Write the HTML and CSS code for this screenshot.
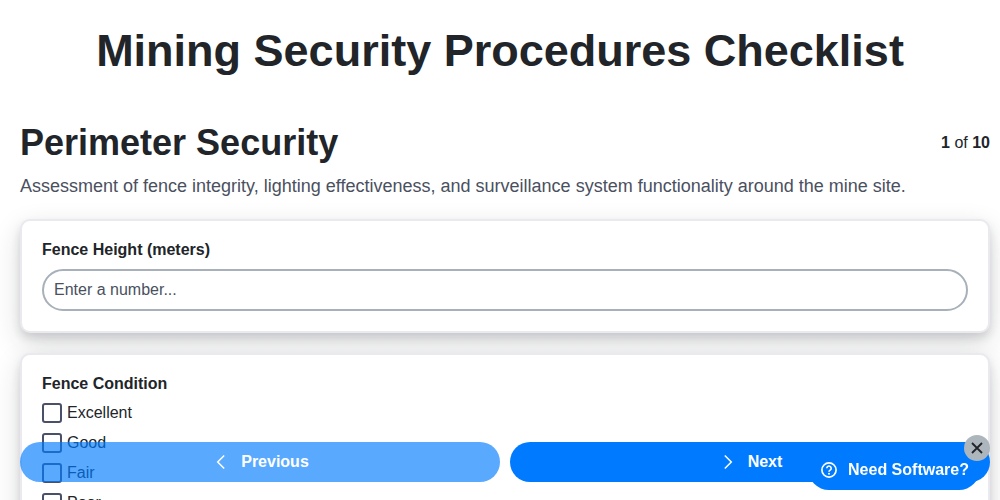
FILE: index.html
```html
<!DOCTYPE html>
<html lang="en">
<head>
<meta charset="utf-8">
<title>Mining Security Procedures Checklist</title>
<link rel="stylesheet" href="styles.css">
</head>
<body>
<main class="page">
  <h1 class="title">Mining Security Procedures Checklist</h1>
  <div class="section-head">
    <h2 class="section-title">Perimeter Security</h2>
    <div class="pager"><b>1</b> of <b>10</b></div>
  </div>
  <p class="section-desc">Assessment of fence integrity, lighting effectiveness, and surveillance system functionality around the mine site.</p>
  <section class="card">
    <label class="field-label" for="h">Fence Height (meters)</label>
    <input class="text-input" id="h" type="text" placeholder="Enter a number...">
  </section>
  <section class="card">
    <div class="field-label">Fence Condition</div>
    <div class="options">
      <label class="option"><span class="box"></span>Excellent</label>
      <label class="option"><span class="box"></span>Good</label>
      <label class="option"><span class="box"></span>Fair</label>
      <label class="option"><span class="box"></span>Poor</label>
    </div>
  </section>
</main>
<nav class="nav">
  <button class="nav-btn prev"><svg class="chev" viewBox="0 0 16 16" width="16" height="16"><path d="M11.2 1.5 4.7 8l6.5 6.5" fill="none" stroke="currentColor" stroke-width="1.5"/></svg>Previous</button>
  <button class="nav-btn next"><svg class="chev" viewBox="0 0 16 16" width="16" height="16"><path d="M4.8 1.5 11.3 8l-6.5 6.5" fill="none" stroke="currentColor" stroke-width="1.5"/></svg>Next</button>
</nav>
<a class="promo"><svg viewBox="0 0 16 16" width="16" height="16"><circle cx="8" cy="8" r="7.1" fill="none" stroke="currentColor" stroke-width="1.7"/><path d="M5.8 6.2a2.2 2.2 0 1 1 3.4 1.9c-.8.5-1.2.9-1.2 1.7" fill="none" stroke="currentColor" stroke-width="1.6"/><circle cx="8" cy="11.8" r="1" fill="currentColor"/></svg>Need Software?</a>
<button class="close" aria-label="Close"><svg viewBox="0 0 16 16" width="16" height="16"><path d="M3 3l10 10M13 3 3 13" stroke="currentColor" stroke-width="1.8" fill="none"/></svg></button>
</body>
</html>
```
FILE: styles.css
```css
* { box-sizing: border-box; }
html, body { height: 100%; overflow: hidden; }
body {
  margin: 0;
  background: #fff;
  color: #212529;
  font-family: "Liberation Sans", Arial, sans-serif;
  font-size: 16px;
}
.page { padding: 25px 10px 0 20px; }
.title {
  margin: 0 0 44px;
  padding-right: 10px;
  font-size: 45px;
  line-height: 52px;
  font-weight: 700;
  text-align: center;
}
.section-head {
  display: flex;
  justify-content: space-between;
  align-items: flex-start;
}
.section-title {
  margin: 0;
  font-size: 36px;
  line-height: 43px;
  font-weight: 700;
}
.pager { font-size: 16px; line-height: 18px; margin-top: 13px; }
.section-desc {
  margin: 11px 0 22px;
  font-size: 18px;
  line-height: 22px;
  color: #4a5060;
}
.card {
  background: #fff;
  border: 2px solid #e9e9ef;
  border-radius: 10px;
  padding: 20px;
  margin-bottom: 20px;
  box-shadow: 0 5px 8px rgba(33, 37, 41, .14), 0 10px 28px rgba(33, 37, 41, .16);
}
.field-label {
  display: block;
  font-weight: 700;
  font-size: 16px;
  line-height: 18px;
  margin-bottom: 10px;
}
.text-input {
  display: block;
  width: 100%;
  height: 42px;
  border: 2px solid #a8b0ba;
  border-radius: 21px;
  padding: 0 10px;
  font: 16px "Liberation Sans", Arial, sans-serif;
  color: #212529;
  background: #fff;
  outline: none;
}
.text-input::placeholder { color: #4a5060; opacity: 1; }
.options { display: flex; flex-direction: column; margin-top: -5px; }
.option {
  display: flex;
  align-items: center;
  gap: 5px;
  height: 30px;
  font-size: 16px;
}
.box {
  width: 20px;
  height: 20px;
  border: 2px solid #4a5068;
  border-radius: 3px;
  background: #fff;
}
.nav {
  position: fixed;
  left: 20px;
  right: 10px;
  top: 442px;
  display: flex;
  gap: 10px;
}
.nav-btn {
  flex: 1;
  height: 40px;
  border: 0;
  border-radius: 20px;
  background: #007bff;
  color: #fff;
  font: 700 16px "Liberation Sans", Arial, sans-serif;
  display: flex;
  align-items: center;
  justify-content: center;
  gap: 12px;
  padding: 0 0 0 2px;
}
.nav-btn.prev { opacity: .65; }
.promo {
  position: fixed;
  left: 808px;
  top: 448px;
  width: 172px;
  height: 42px;
  padding: 1px 0 0 2px;
  border-radius: 21px;
  background: #007bff;
  color: #fff;
  font-weight: 700;
  font-size: 16px;
  display: flex;
  align-items: center;
  justify-content: center;
  gap: 11px;
}
.close {
  position: fixed;
  left: 964px;
  top: 435px;
  width: 26px;
  height: 26px;
  border: 0;
  border-radius: 50%;
  padding: 0;
  background: #adb5bd;
  color: #212529;
  display: flex;
  align-items: center;
  justify-content: center;
}
```
